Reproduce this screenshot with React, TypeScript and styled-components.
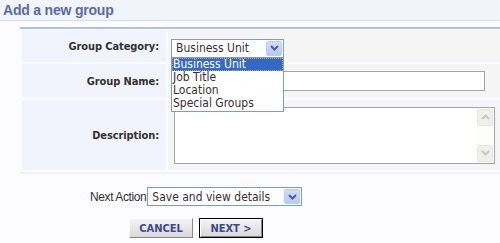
import React from 'react';
import styled, { createGlobalStyle } from 'styled-components';

const categories = ['Business Unit', 'Job Title', 'Location', 'Special Groups'];

const GlobalStyle = createGlobalStyle`
  html, body {
    margin: 0;
    padding: 0;
    background: #fcfcff;
    font-family: "DejaVu Sans Condensed", "DejaVu Sans", sans-serif;
  }
`;

const ChevronDown = ({ color }: { color: string }) => (
  <svg width="9" height="6" viewBox="0 0 9 6">
    <path d="M1 1 L4.5 4.5 L8 1" fill="none" stroke={color} strokeWidth="2" />
  </svg>
);

const ChevronUp = ({ color }: { color: string }) => (
  <svg width="9" height="6" viewBox="0 0 9 6">
    <path d="M1 5 L4.5 1.5 L8 5" fill="none" stroke={color} strokeWidth="2" />
  </svg>
);

const App = () => {
  return (
    <Page>
      <GlobalStyle />
      <Header>Add a new group</Header>
      <Form>
        <Label>Group Category:</Label>
        <Value>
          <SelectWrap>
            <Select width={113}>
              <SelectText>Business Unit</SelectText>
              <ArrowButton>
                <ChevronDown color="#4d6185" />
              </ArrowButton>
            </Select>
            <DropList>
              {categories.map((c, i) => (
                <DropItem key={c} selected={i === 0}>
                  {c}
                </DropItem>
              ))}
            </DropList>
          </SelectWrap>
        </Value>

        <Label>Group Name:</Label>
        <Value>
          <TextInput />
        </Value>

        <Label>Description:</Label>
        <Value tall>
          <TextArea>
            <TextAreaBody />
            <ScrollBar>
              <ScrollButton>
                <ChevronUp color="#c8c8c0" />
              </ScrollButton>
              <ScrollButton>
                <ChevronDown color="#c8c8c0" />
              </ScrollButton>
            </ScrollBar>
          </TextArea>
        </Value>
      </Form>

      <ActionRow>
        <ActionLabel>Next Action</ActionLabel>
        <Select width={155}>
          <SelectText>Save and view details</SelectText>
          <ArrowButton>
            <ChevronDown color="#4d6185" />
          </ArrowButton>
        </Select>
      </ActionRow>

      <ButtonRow>
        <Button>CANCEL</Button>
        <Button primary>NEXT &gt;</Button>
      </ButtonRow>
    </Page>
  );
};

export default App;

const Page = styled.div`
  width: 500px;
  height: 243px;
  overflow: hidden;
`;

const Header = styled.div`
  height: 20px;
  line-height: 20px;
  padding-left: 3px;
  background: #f2f4fc;
  border-bottom: 1px solid #d6dcf0;
  font-family: "Liberation Sans", Arial, sans-serif;
  font-weight: bold;
  font-size: 14px;
  letter-spacing: -0.2px;
  color: #5a68ae;
`;

const Form = styled.div`
  margin: 6px 0 0 20px;
  border-top: 2px solid #b4c0e2;
  border-bottom: 2px solid #eef2fb;
  background: #fbfcff;
  padding: 1px 0 2px 2px;
  display: grid;
  grid-template-columns: 144px 1fr;
  grid-template-rows: 32px 34px 70px;
  gap: 2px;
`;

const Label = styled.div`
  background: #f1f4fc;
  display: flex;
  align-items: center;
  justify-content: flex-end;
  padding-right: 7px;
  font-weight: bold;
  font-size: 11px;
  letter-spacing: -0.1px;
  color: #333;
`;

const Value = styled.div<{ tall?: boolean }>`
  background: #f5f5f5;
  display: flex;
  align-items: center;
  padding-left: ${(p) => (p.tall ? 6 : 3)}px;
`;

const SelectWrap = styled.div`
  position: relative;
  margin-top: 4px;
`;

const Select = styled.div<{ width: number }>`
  width: ${(p) => p.width}px;
  height: 19px;
  box-sizing: border-box;
  border: 1px solid #7f9db9;
  background: #fff;
  display: flex;
  align-items: center;
  justify-content: space-between;
  padding: 0 1px 0 4px;
`;

const SelectText = styled.span`
  font-size: 12px;
  color: #3a2f33;
  white-space: nowrap;
`;

const ArrowButton = styled.div`
  width: 16px;
  height: 15px;
  background: linear-gradient(#d0dcfc, #b6c9f8);
  border: 1px solid #bccdf4;
  box-sizing: border-box;
  border-radius: 2px;
  display: flex;
  align-items: center;
  justify-content: center;
`;

const DropList = styled.div`
  position: absolute;
  top: 18px;
  left: 0;
  width: 113px;
  box-sizing: border-box;
  border: 1px solid #7f9db9;
  background: #fff;
  z-index: 2;
  padding-bottom: 1px;
`;

const DropItem = styled.div<{ selected?: boolean }>`
  height: 13px;
  line-height: 13px;
  font-size: 12px;
  padding-left: 1px;
  white-space: nowrap;
  color: ${(p) => (p.selected ? '#fff' : '#3a2f33')};
  background: ${(p) => (p.selected ? '#316ac5' : 'transparent')};
  outline: ${(p) => (p.selected ? '1px dotted #e0a040' : 'none')};
  outline-offset: -1px;
`;

const TextInput = styled.div`
  width: 314px;
  height: 20px;
  box-sizing: border-box;
  border: 1px solid #a5a5a5;
  background: #fff;
`;

const TextArea = styled.div`
  width: 321px;
  height: 57px;
  box-sizing: border-box;
  border: 1px solid #a5a5a5;
  background: #fff;
  display: flex;
`;

const TextAreaBody = styled.div`
  flex: 1;
`;

const ScrollBar = styled.div`
  width: 16px;
  display: flex;
  flex-direction: column;
  justify-content: space-between;
  padding: 1px 1px 1px 0;
  background: #fdfdfa;
`;

const ScrollButton = styled.div`
  height: 15px;
  background: #f0f0ea;
  border: 1px solid #e6e6de;
  border-radius: 2px;
  display: flex;
  align-items: center;
  justify-content: center;
`;

const ActionRow = styled.div`
  display: flex;
  align-items: center;
  padding-left: 90px;
  margin-top: 13px;
`;

const ActionLabel = styled.span`
  font-family: "Liberation Sans", Arial, sans-serif;
  font-size: 12px;
  letter-spacing: -0.4px;
  color: #333;
  margin-right: 1px;
`;

const ButtonRow = styled.div`
  display: flex;
  gap: 6px;
  padding-left: 129px;
  margin-top: 12px;
`;

const Button = styled.button<{ primary?: boolean }>`
  width: 64px;
  height: 20px;
  box-sizing: border-box;
  padding: 0;
  font-family: "DejaVu Sans Condensed", "DejaVu Sans", sans-serif;
  font-weight: bold;
  font-size: 11px;
  color: #3c4a8c;
  background: linear-gradient(#f4f4f4, #d8d8d8);
  border: 1px solid;
  border-color: ${(p) => (p.primary ? '#000' : '#fff #888 #888 #fff')};
  box-shadow: ${(p) =>
    p.primary ? 'inset 1px 1px 0 #fff, inset -1px -1px 0 #888' : 'none'};
  cursor: pointer;
`;
